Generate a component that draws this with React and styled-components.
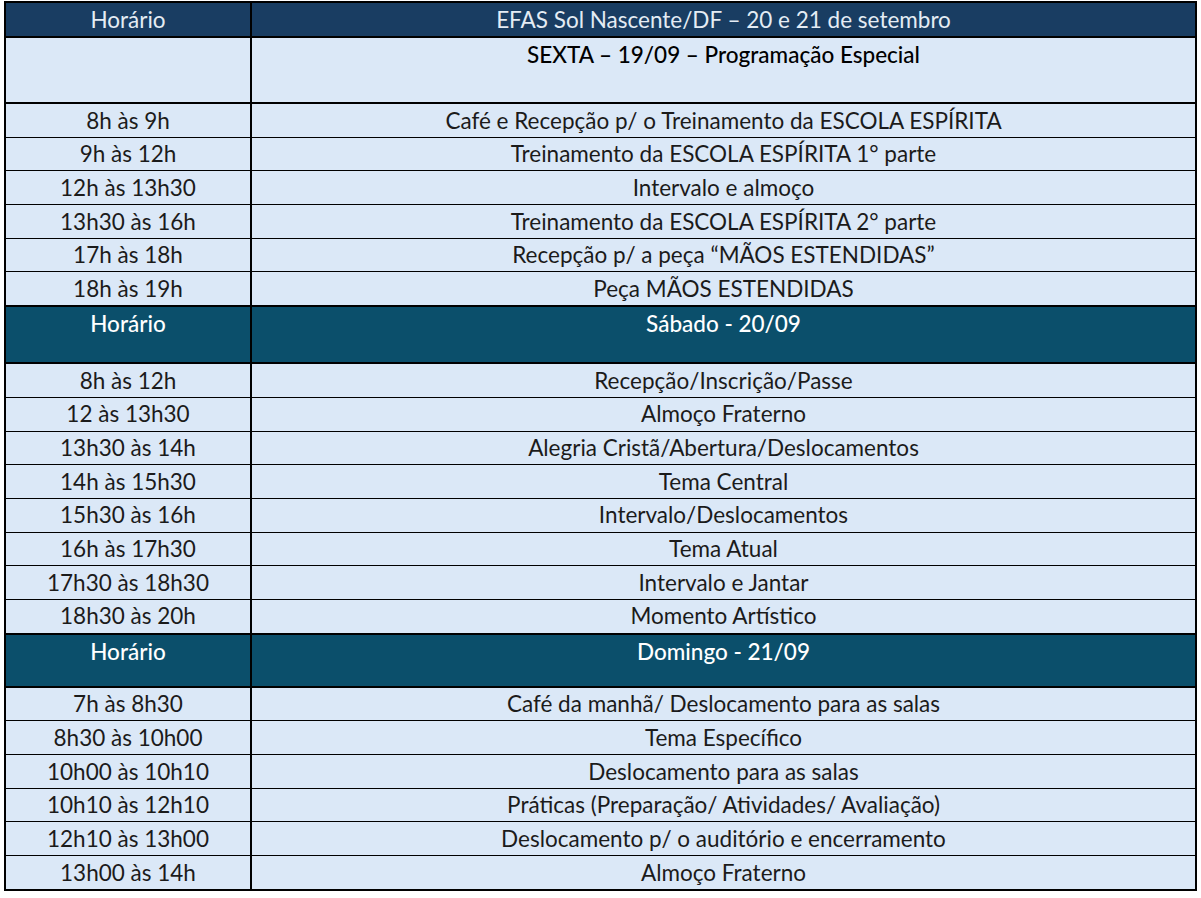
import React from "react";
import styled, { createGlobalStyle } from "styled-components";

const GlobalStyle = createGlobalStyle`
  html, body {
    margin: 0;
    padding: 0;
    background: #ffffff;
  }
  body {
    font-family: Lato, "Open Sans", "Liberation Sans", sans-serif;
  }
`;

const Page = styled.div`
  padding: 1px 4px 0 4px;
`;

const Table = styled.table`
  width: 1193px;
  border-collapse: collapse;
  table-layout: fixed;
  border: 2px solid #000;
  font-size: 22.5px;
  color: #1b1b1b;
`;

const Cell = styled.td`
  text-align: center;
  vertical-align: ${(p) => (p.$top ? "top" : "middle")};
  padding: ${(p) => (p.$top ? "5px 4px 0" : "0 4px")};
  border-top: ${(p) => (p.$thick ? "2px" : "1px")} solid #000;
  border-left: 2px solid #000;
  border-right: 2px solid #000;
  background: ${(p) => p.$bg};
  color: ${(p) => p.$color};
  font-weight: ${(p) => p.$weight || 400};
  height: ${(p) => p.$h}px;
  line-height: 1.05;
  white-space: nowrap;
`;

const schedule = [
  {
    title: "SEXTA – 19/09 – Programação Especial",
    kind: "intro",
    h: 59,
    rows: [
      ["8h às 9h", "Café e Recepção p/ o Treinamento da ESCOLA ESPÍRITA"],
      ["9h às 12h", "Treinamento da ESCOLA ESPÍRITA 1° parte"],
      ["12h às 13h30", "Intervalo e almoço"],
      ["13h30 às 16h", "Treinamento da ESCOLA ESPÍRITA 2° parte"],
      ["17h às 18h", "Recepção p/ a peça “MÃOS ESTENDIDAS”"],
      ["18h às 19h", "Peça MÃOS ESTENDIDAS"],
    ],
  },
  {
    title: "Sábado - 20/09",
    kind: "section",
    h: 50,
    rows: [
      ["8h às 12h", "Recepção/Inscrição/Passe"],
      ["12 às 13h30", "Almoço Fraterno"],
      ["13h30 às 14h", "Alegria Cristã/Abertura/Deslocamentos"],
      ["14h às 15h30", "Tema Central"],
      ["15h30 às 16h", "Intervalo/Deslocamentos"],
      ["16h às 17h30", "Tema Atual"],
      ["17h30 às 18h30", "Intervalo e Jantar"],
      ["18h30 às 20h", "Momento Artístico"],
    ],
  },
  {
    title: "Domingo - 21/09",
    kind: "section",
    h: 46,
    rows: [
      ["7h às 8h30", "Café da manhã/ Deslocamento para as salas"],
      ["8h30 às 10h00", "Tema Específico"],
      ["10h00 às 10h10", "Deslocamento para as salas"],
      ["10h10 às 12h10", "Práticas  (Preparação/  Atividades/  Avaliação)"],
      ["12h10 às 13h00", "Deslocamento p/ o auditório e encerramento"],
      ["13h00 às 14h", "Almoço Fraterno"],
    ],
  },
];

const LIGHT = "#dbe8f7";
const NAVY = "#193d62";
const TEAL = "#0b4f6b";

export default function App() {
  return (
    <Page>
      <GlobalStyle />
      <Table>
        <colgroup>
          <col style={{ width: 246 }} />
          <col />
        </colgroup>
        <tbody>
          <tr>
            <Cell $bg={NAVY} $color="#e4ecf4" $h={33}>Horário</Cell>
            <Cell $bg={NAVY} $color="#e4ecf4" $h={33}>
              EFAS Sol Nascente/DF – 20 e 21 de setembro
            </Cell>
          </tr>
          {schedule.map((block) => (
            <React.Fragment key={block.title}>
              {block.kind === "intro" ? (
                <tr>
                  <Cell $bg={LIGHT} $thick $h={block.h} $top />
                  <Cell $bg={LIGHT} $thick $h={block.h} $top $color="#000" $weight={500}>
                    {block.title}
                  </Cell>
                </tr>
              ) : (
                <tr>
                  <Cell $bg={TEAL} $thick $h={block.h} $top $color="#fff" $weight={500}>
                    Horário
                  </Cell>
                  <Cell $bg={TEAL} $thick $h={block.h} $top $color="#fff" $weight={500}>
                    {block.title}
                  </Cell>
                </tr>
              )}
              {block.rows.map(([time, what], i) => (
                <tr key={time + what}>
                  <Cell $bg={LIGHT} $thick={i === 0} $h={32.7}>{time}</Cell>
                  <Cell $bg={LIGHT} $thick={i === 0} $h={32.7}>{what}</Cell>
                </tr>
              ))}
            </React.Fragment>
          ))}
        </tbody>
      </Table>
    </Page>
  );
}
